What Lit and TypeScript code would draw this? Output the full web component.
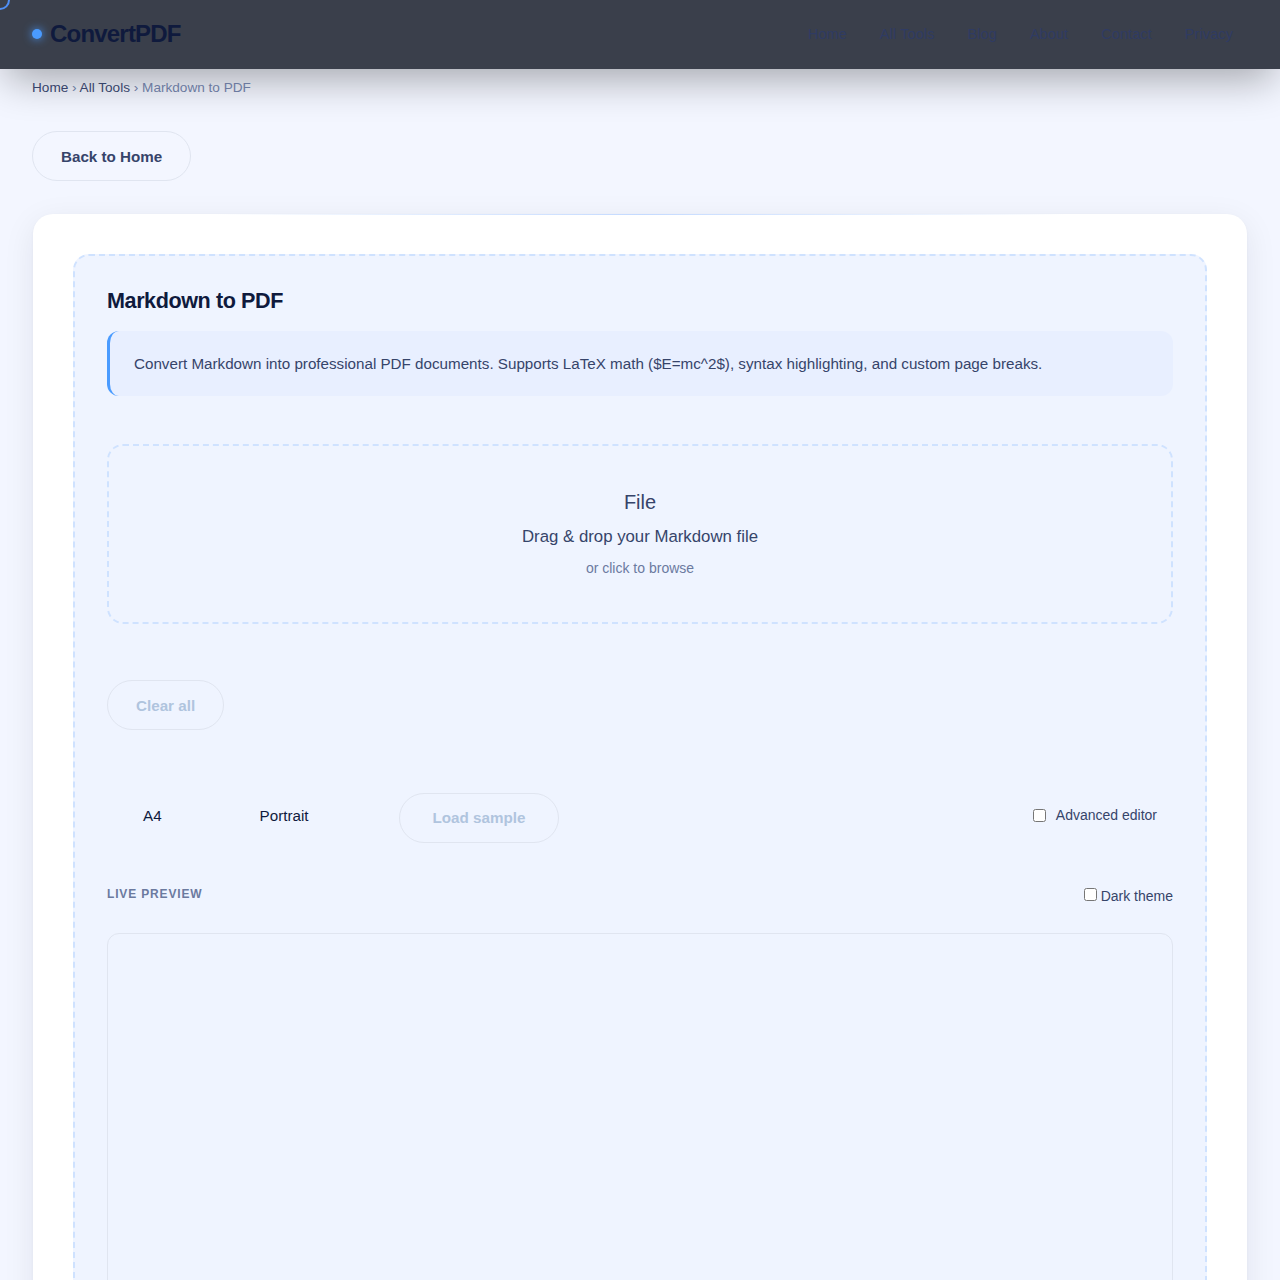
import {LitElement, html, css} from 'lit';
import {customElement} from 'lit/decorators.js';

@customElement('app-root')
export class AppRoot extends LitElement {
    static styles = css`
      :host {
        display: block;
        position: relative;
        height: 1280px;
        overflow: hidden;
        background: #f3f6ff;
        font-family: 'Liberation Sans', Arial, sans-serif;
        color: #36446a;
      }

      .cursor-ring {
        position: absolute;
        left: -10px;
        top: -10px;
        width: 16px;
        height: 16px;
        border: 2px solid #4f8ff7;
        border-radius: 50%;
        z-index: 5;
      }

      header {
        position: relative;
        z-index: 2;
        height: 69px;
        box-sizing: border-box;
        padding: 0 47px 1px 32px;
        display: flex;
        align-items: center;
        justify-content: space-between;
        background: #3a3f4b;
        box-shadow: 0 16px 40px -6px rgba(0, 0, 0, 0.33);
      }

      .logo {
        display: flex;
        align-items: center;
        gap: 8px;
        font-size: 24px;
        font-weight: 700;
        letter-spacing: -0.8px;
        color: #0f1a3d;
      }

      .dot {
        width: 10px;
        height: 10px;
        border-radius: 50%;
        background: #4a9bff;
        box-shadow: 0 0 10px #4a9bff;
      }

      nav {
        display: flex;
        gap: 33px;
        font-size: 14.4px;
        letter-spacing: 0.144px;
        color: #2f3b63;
      }

      .crumbs {
        position: relative;
        z-index: 3;
        padding: 11px 32px 0;
        font-size: 13.6px;
        line-height: 16px;
        color: #6b7a9f;
      }

      .crumbs b {
        font-weight: 400;
        color: #36446a;
      }

      .btn {
        display: inline-flex;
        align-items: center;
        justify-content: center;
        box-sizing: border-box;
        height: 50px;
        padding: 0 28px;
        border: 1px solid #e0e5f0;
        border-radius: 25px;
        font-size: 15.2px;
        font-weight: 700;
      }

      .btn.off {
        color: #b0c4de;
      }

      .back {
        margin: 35px 32px 33px;
      }

      .card {
        position: relative;
        margin: 0 33px;
        padding: 40px;
        height: 1200px;
        box-sizing: border-box;
        background: #fff;
        border-radius: 20px;
        box-shadow: 0 8px 32px rgba(15, 23, 42, 0.08), 0 1px 3px rgba(15, 23, 42, 0.04);
      }

      .card::before {
        content: '';
        position: absolute;
        top: 0;
        left: 0;
        right: 0;
        height: 1px;
        background: linear-gradient(90deg, transparent 15%, #c4daff 50%, transparent 85%);
      }

      .panel {
        height: 1200px;
        box-sizing: border-box;
        padding: 32px;
        background: #eff4ff;
        border: 2px dashed #cfe2ff;
        border-radius: 16px;
      }

      h1 {
        margin: 0 0 18px;
        font-size: 21.6px;
        line-height: 25px;
        letter-spacing: -0.43px;
        color: #0f1a3d;
      }

      .info {
        height: 65px;
        box-sizing: border-box;
        padding: 0 24px;
        display: flex;
        align-items: center;
        background: #e8efff;
        border-left: 3px solid #4a9bff;
        border-radius: 12px;
        font-size: 15.2px;
      }

      .drop {
        margin-top: 48px;
        height: 180px;
        box-sizing: border-box;
        display: flex;
        flex-direction: column;
        align-items: center;
        justify-content: center;
        border: 2px dashed #cfe2ff;
        border-radius: 16px;
      }

      .drop .big {
        margin-top: -3px;
        font-size: 20px;
        line-height: 24px;
      }

      .drop .mid {
        margin-top: 13px;
        font-size: 16.8px;
        line-height: 20px;
      }

      .drop .small {
        margin-top: 13px;
        font-size: 14px;
        line-height: 16px;
        color: #6b7a9f;
      }

      .clear {
        margin-top: 56px;
      }

      .options {
        margin-top: 63px;
        height: 50px;
        display: flex;
        align-items: center;
      }

      .opt {
        font-size: 15.2px;
        color: #0f1a3d;
        margin-top: -6px;
      }

      .opt.size {
        margin-left: 36px;
      }

      .opt.orient {
        margin-left: 98px;
      }

      .options .btn {
        margin-left: 90px;
        padding: 0 33px 2px;
      }

      .check {
        display: flex;
        align-items: center;
        font-size: 14px;
      }

      .adv {
        margin: -6px 16px 0 auto;
        gap: 10px;
      }

      input {
        margin: 0;
        width: 13px;
        height: 13px;
      }

      .preview-head {
        margin-top: 44px;
        height: 30px;
        display: flex;
        justify-content: space-between;
        align-items: flex-start;
      }

      .label {
        font-size: 12px;
        line-height: 14px;
        font-weight: 700;
        letter-spacing: 0.84px;
        color: #6b7a9f;
      }

      .dark {
        gap: 4px;
        line-height: 18px;
        align-items: flex-start;
      }

      .dark input {
        margin-top: 1px;
      }

      .preview {
        margin-top: 16px;
        height: 500px;
        border: 1px solid #e0e5f0;
        border-radius: 12px;
      }
    `

    render() {
        return html`
            <div class="cursor-ring"></div>
            <header>
                <div class="logo"><span class="dot"></span>ConvertPDF</div>
                <nav>
                    <span>Home</span>
                    <span>All Tools</span>
                    <span>Blog</span>
                    <span>About</span>
                    <span>Contact</span>
                    <span>Privacy</span>
                </nav>
            </header>
            <div class="crumbs"><b>Home</b> › <b>All Tools</b> › Markdown to PDF</div>
            <div class="back btn">Back to Home</div>
            <div class="card">
                <div class="panel">
                    <h1>Markdown to PDF</h1>
                    <div class="info">Convert Markdown into professional PDF documents. Supports LaTeX math ($E=mc^2$), syntax highlighting, and custom page breaks.</div>
                    <div class="drop">
                        <div class="big">File</div>
                        <div class="mid">Drag &amp; drop your Markdown file</div>
                        <div class="small">or click to browse</div>
                    </div>
                    <div class="clear btn off">Clear all</div>
                    <div class="options">
                        <span class="opt size">A4</span>
                        <span class="opt orient">Portrait</span>
                        <div class="btn off">Load sample</div>
                        <label class="check adv"><input type="checkbox" />Advanced editor</label>
                    </div>
                    <div class="preview-head">
                        <span class="label">LIVE PREVIEW</span>
                        <label class="check dark"><input type="checkbox" />Dark theme</label>
                    </div>
                    <div class="preview"></div>
                </div>
            </div>
        `
    }
}
